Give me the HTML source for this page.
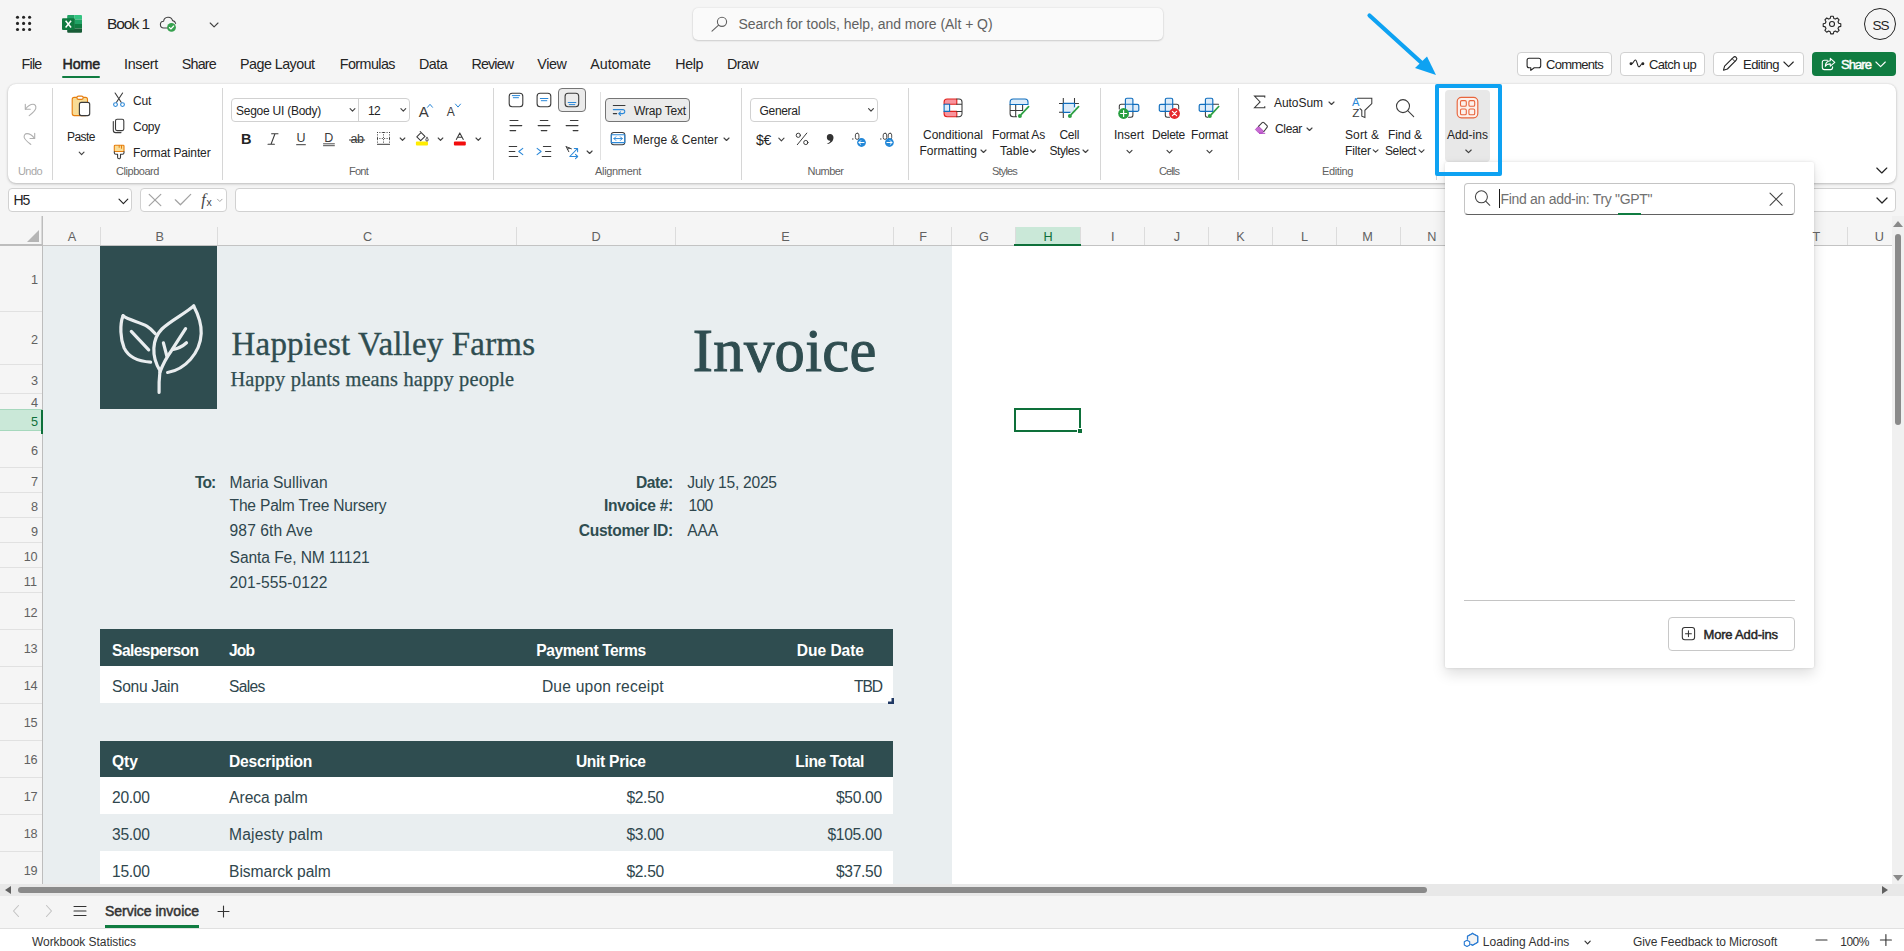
<!DOCTYPE html>
<html><head><meta charset="utf-8"><title>Book 1 - Excel</title>
<style>
*{box-sizing:border-box;margin:0;padding:0}
html,body{width:1904px;height:951px;overflow:hidden;background:#f5f5f5;font-family:"Liberation Sans",sans-serif;}
.a{position:absolute}
.t{position:absolute;white-space:pre;line-height:1;font-family:"Liberation Sans",sans-serif;}
.t.fs{font-family:"Liberation Serif",serif;}
svg{position:absolute;overflow:visible}
.sep{position:absolute;width:1px;background:#d6d6d6;top:88px;height:92px}
.btn{position:absolute;background:#fff;border:1px solid #d1d1d1;border-radius:4px}
.box{position:absolute;background:#fff;border:1px solid #d1d1d1;border-radius:4px}
.rl{position:absolute;left:0;width:42px;height:1px;background:#e1e1e1}
.cl{position:absolute;top:227px;width:1px;height:18px;background:#dcdcdc}
</style></head><body>
<!-- search -->
<div class="a" style="left:693px;top:8px;width:470px;height:32px;background:#fafafa;border-radius:5px;box-shadow:0 0 2px rgba(0,0,0,.12),0 1px 2px rgba(0,0,0,.14)"></div>
<!-- avatar -->
<div class="a" style="left:1864px;top:8px;width:32px;height:32px;border-radius:50%;border:1px solid #242424"></div>
<!-- tab underline -->
<div class="a" style="left:62.4px;top:75.5px;width:37.8px;height:2.5px;background:#107c41;border-radius:1px"></div>
<!-- top right buttons -->
<div class="btn" style="left:1517px;top:52px;width:95px;height:24px"></div>
<div class="btn" style="left:1620px;top:52px;width:85px;height:24px"></div>
<div class="btn" style="left:1713px;top:52px;width:91px;height:24px"></div>
<div class="a" style="left:1812px;top:52px;width:84px;height:24px;background:#107c41;border-radius:4px"></div>
<!-- ribbon -->
<div class="a" style="left:8px;top:84px;width:1888px;height:99px;background:#fff;border-radius:8px;box-shadow:0 1px 3px rgba(0,0,0,.22),0 0 2px rgba(0,0,0,.10)"></div>
<div class="sep" style="left:52px"></div>
<div class="sep" style="left:222px"></div>
<div class="sep" style="left:493px"></div>
<div class="sep" style="left:741px"></div>
<div class="sep" style="left:908px"></div>
<div class="sep" style="left:1100px"></div>
<div class="sep" style="left:1238px"></div>
<div class="sep" style="left:1436px;top:160px;height:20px"></div>
<div class="sep" style="left:600px;top:92px;height:68px;background:#e0e0e0"></div>
<!-- font boxes -->
<div class="box" style="left:231px;top:98px;width:179px;height:23.5px"></div>
<div class="a" style="left:358px;top:99px;width:1px;height:22px;background:#d1d1d1"></div>
<div class="box" style="left:750px;top:98px;width:128px;height:23.5px"></div>
<!-- selected align btn & wrap text -->
<div class="a" style="left:558px;top:88px;width:28px;height:24px;background:#ebebeb;border:1px solid #757575;border-radius:4px"></div>
<div class="a" style="left:605px;top:98px;width:85px;height:24px;background:#ebebeb;border:1px solid #757575;border-radius:4px"></div>
<!-- add-ins button bg -->
<div class="a" style="left:1445px;top:90px;width:45px;height:72px;background:#e8e8e8;border-radius:4px"></div>
<!-- formula bar -->
<div class="box" style="left:8px;top:188px;width:124px;height:24px"></div>
<div class="box" style="left:140px;top:188px;width:87px;height:24px"></div>
<div class="box" style="left:235px;top:188px;width:1661px;height:24px"></div>
<!-- grid headers -->
<div class="a" style="left:1015px;top:227px;width:65px;height:18px;background:#cae8d8"></div>
<div class="a" style="left:0;top:409px;width:42px;height:22px;background:#cae8d8;border-top:1px solid #a6d8bd;border-bottom:1px solid #a6d8bd"></div>
<div class="cl" style="left:100px"></div><div class="cl" style="left:217px"></div><div class="cl" style="left:516px"></div><div class="cl" style="left:675px"></div><div class="cl" style="left:893px"></div><div class="cl" style="left:951px"></div><div class="cl" style="left:1015px"></div><div class="cl" style="left:1080px"></div><div class="cl" style="left:1144px"></div><div class="cl" style="left:1208px"></div><div class="cl" style="left:1272px"></div><div class="cl" style="left:1336px"></div><div class="cl" style="left:1400px"></div><div class="cl" style="left:1847px"></div>
<div class="rl" style="top:311px"></div><div class="rl" style="top:364px"></div><div class="rl" style="top:393px"></div><div class="rl" style="top:467px"></div><div class="rl" style="top:492px"></div><div class="rl" style="top:517px"></div><div class="rl" style="top:542px"></div><div class="rl" style="top:567px"></div><div class="rl" style="top:592px"></div><div class="rl" style="top:629px"></div><div class="rl" style="top:666px"></div><div class="rl" style="top:703px"></div><div class="rl" style="top:740px"></div><div class="rl" style="top:777px"></div><div class="rl" style="top:814px"></div><div class="rl" style="top:851px"></div>
<div class="a" style="left:42px;top:216px;width:1px;height:668px;background:#bdbdbd"></div><div class="a" style="left:41px;top:216px;width:1px;height:29px;background:#dadada"></div>
<div class="a" style="left:0;top:244px;width:43px;height:2px;background:#bdbdbd"></div>
<div class="a" style="left:43px;top:245px;width:1849px;height:1px;background:#c3c3c3"></div>
<div class="a" style="left:1014px;top:244px;width:67px;height:2px;background:#0e703a"></div>
<div class="a" style="left:41px;top:410px;width:2px;height:24px;background:#0e703a"></div>
<svg style="left:27px;top:230px" width="12" height="12"><path d="M12 0V12H0Z" fill="#b5b5b5"/></svg>
<!-- sheet -->
<div class="a" style="left:43px;top:246px;width:1849px;height:638px;background:#fff"></div>
<div class="a" style="left:43px;top:246px;width:909px;height:638px;background:#e9eef0"></div>
<div class="a" style="left:100px;top:246px;width:117px;height:163px;background:#2f4d50"></div>
<div class="a" style="left:100px;top:629px;width:793px;height:37px;background:#2f4d50"></div>
<div class="a" style="left:100px;top:666px;width:793px;height:37px;background:#fff"></div>
<div class="a" style="left:100px;top:741px;width:793px;height:36px;background:#2f4d50"></div>
<div class="a" style="left:100px;top:777px;width:793px;height:37px;background:#fff"></div>
<div class="a" style="left:100px;top:851px;width:793px;height:33px;background:#fff"></div>
<svg style="left:888px;top:698px" width="6" height="6"><path d="M3.5 0H6V6H0V3.5H3.5Z" fill="#1f3864"/></svg>
<!-- logo -->
<svg style="left:0;top:0" width="1904" height="951" fill="none" stroke="#e9edef" stroke-width="3.2" stroke-linecap="round" stroke-linejoin="round">
<path d="M193.7 305.9 C198.5 315 201.6 324.5 201.2 333.5 C200.3 353 185 369.5 167.6 372.5"/>
<path d="M193.7 305.9 C186 313 170 321 161.9 329 C152 339 151 356 160 370.6 C159.3 377 158.8 385 159.1 392.4"/>
<path d="M185.6 328.6 L171.4 350.7 C166 358 163 364 160 372"/>
<path d="M173.3 349.4 C178 348.6 183 346 186.5 342.8"/>
<path d="M166.7 355.5 L163.4 342.8"/>
<path d="M123.1 315.7 C128 320 140 322 146.8 326.1 C150 328 153 331 155.3 333.7"/>
<path d="M123.1 315.7 C119.5 325 120.5 339 124.1 347.9 C129 358 139 361.5 150.6 362.1"/>
<path d="M131.3 331.4 L148.7 349.8"/>
</svg>
<!-- selection -->
<div class="a" style="left:1014px;top:408px;width:67px;height:24px;border:2px solid #0e703a"></div>
<div class="a" style="left:1077px;top:428px;width:6px;height:6px;background:#fff"></div>
<div class="a" style="left:1078px;top:429px;width:4px;height:4px;background:#0e703a"></div>
<!-- vscroll -->
<div class="a" style="left:1892px;top:216px;width:12px;height:668px;background:#f0f0f0"></div>
<div class="a" style="left:1895px;top:234px;width:6px;height:191px;background:#8a8a8a;border-radius:3px"></div>
<svg style="left:1893px;top:221px" width="10" height="6"><path d="M0 6L5 0L10 6Z" fill="#8a8a8a"/></svg>
<svg style="left:1893px;top:875px" width="10" height="6"><path d="M0 0L5 6L10 0Z" fill="#8a8a8a"/></svg>
<!-- hscroll -->
<div class="a" style="left:0;top:884px;width:1904px;height:12px;background:#e8e8e8"></div>
<div class="a" style="left:18px;top:887px;width:1409px;height:6px;background:#8a8a8a;border-radius:3px"></div>
<svg style="left:5px;top:886px" width="6" height="8"><path d="M6 0L0 4L6 8Z" fill="#616161"/></svg>
<svg style="left:1882px;top:886px" width="6" height="8"><path d="M0 0L6 4L0 8Z" fill="#616161"/></svg>
<!-- sheet tabs / status -->
<div class="a" style="left:0;top:896px;width:1904px;height:32px;background:#f5f5f5"></div>
<div class="a" style="left:105px;top:925px;width:94px;height:3px;background:#107c41"></div>
<div class="a" style="left:0;top:928px;width:1904px;height:1px;background:#e0e0e0"></div>
<div class="a" style="left:0;top:929px;width:1904px;height:22px;background:#fff"></div>
<!-- popup -->
<div class="a" style="left:1445px;top:162px;width:369px;height:506px;background:#fff;border-radius:2px;box-shadow:0 6px 14px rgba(0,0,0,.13),0 0 3px rgba(0,0,0,.13)"></div>
<div class="a" style="left:1464px;top:183px;width:331px;height:32px;background:#fff;border:1px solid #c4c4c4;border-bottom:1.5px solid #616161;border-radius:4px"></div>
<div class="a" style="left:1618px;top:213px;width:23px;height:2px;background:#107c41"></div>
<div class="a" style="left:1499px;top:189px;width:1px;height:19px;background:#1a1a1a"></div>
<div class="a" style="left:1464px;top:600px;width:331px;height:1px;background:#c4c4c4"></div>
<div class="btn" style="left:1668px;top:617px;width:127px;height:34px;border-color:#c8c8c8"></div>
<!-- highlight -->
<div class="a" style="left:1435px;top:84px;width:67px;height:91.5px;border:4px solid #0ea2f2;border-radius:2px"></div>
<svg style="left:0;top:0" width="1904" height="951"><path d="M1369.5 15.5L1424 65" stroke="#0ea2f2" stroke-width="4.2" stroke-linecap="round" fill="none"/><path d="M1436 75L1415 68L1427 56.5Z" fill="#0ea2f2"/></svg>
<svg style="left:0;top:0" width="1904" height="951" fill="none" stroke-linecap="round" stroke-linejoin="round">
<!-- waffle -->
<g fill="#242424" stroke="none">
<circle cx="17.5" cy="17.3" r="1.55"/><circle cx="23.6" cy="17.3" r="1.55"/><circle cx="29.6" cy="17.3" r="1.55"/>
<circle cx="17.5" cy="23.4" r="1.55"/><circle cx="23.6" cy="23.4" r="1.55"/><circle cx="29.6" cy="23.4" r="1.55"/>
<circle cx="17.5" cy="29.5" r="1.55"/><circle cx="23.6" cy="29.5" r="1.55"/><circle cx="29.6" cy="29.5" r="1.55"/>
</g>
<!-- excel logo -->
<g stroke="none">
<path d="M68.2 15H74.6V19.5H67.2V16A1 1 0 0 1 68.2 15Z" fill="#21a366"/>
<path d="M74.6 15H81A1 1 0 0 1 82 16V19.5H74.6Z" fill="#33c481"/>
<rect x="67.2" y="19.5" width="7.4" height="4.5" fill="#107c41"/>
<rect x="74.6" y="19.5" width="7.4" height="4.5" fill="#21a366"/>
<rect x="67.2" y="24" width="7.4" height="4.5" fill="#185c37"/>
<rect x="74.6" y="24" width="7.4" height="4.5" fill="#107c41"/>
<path d="M67.2 28.5H82V31.8A1 1 0 0 1 81 32.8H68.2A1 1 0 0 1 67.2 31.8Z" fill="#185c37"/>
<rect x="62" y="18.2" width="12.7" height="11.8" rx="1" fill="#0f7a40"/>
<path d="M65.6 20.8L71.1 27.5M71.1 20.8L65.6 27.5" stroke="#fff" stroke-width="1.5" stroke-linecap="butt"/>
</g>
<!-- cloud saved -->
<path d="M170 28H164A3.4 3.4 0 0 1 163.6 21.2A4.6 4.6 0 0 1 172.6 20.6A3.6 3.6 0 0 1 175.6 23.4" stroke="#424242" stroke-width="1.1"/>
<circle cx="171.5" cy="27.4" r="4.4" fill="#37a14f" stroke="none"/>
<path d="M169.4 27.5L170.9 29L173.7 26" stroke="#fff" stroke-width="1.1"/>
<path d="M210.2 23L214.1 26.9L218 23" stroke="#424242" stroke-width="1.1"/>
<!-- search icon -->
<circle cx="722" cy="21.8" r="4.6" stroke="#616161" stroke-width="1.1"/>
<path d="M718.6 25.2L712 31.2" stroke="#616161" stroke-width="1.1"/>
<!-- gear -->
<g stroke="#242424" stroke-width="1.1">
<circle cx="1832" cy="24" r="2.5"/>
<path d="M1830.7 16.3h2.6l.5 2.1 1.6.7 1.9-1.1 1.8 1.8-1.1 1.9.7 1.6 2.1.5v2.6l-2.1.5-.7 1.6 1.1 1.9-1.8 1.8-1.9-1.1-1.6.7-.5 2.1h-2.6l-.5-2.1-1.6-.7-1.9 1.1-1.8-1.8 1.1-1.9-.7-1.6-2.1-.5v-2.6l2.1-.5.7-1.6-1.1-1.9 1.8-1.8 1.9 1.1 1.6-.7z"/>
</g>
<!-- comments -->
<path d="M1529.1 58.3H1538.7A2 2 0 0 1 1540.7 60.3V65.7A2 2 0 0 1 1538.700 67.7H1534.2L1530.800 70.400V67.700H1529.100A2 2 0 0 1 1527.100 65.700V60.300A2 2 0 0 1 1529.100 58.300Z" stroke="#242424" stroke-width="1.1"/>
<!-- catch up -->
<g stroke="#242424" stroke-width="1.1"><circle cx="1631" cy="63.8" r="0.9" fill="#242424"/><circle cx="1642.9" cy="63.800" r="0.9" fill="#242424"/>
<path d="M1631.500 63.800C1633.500 63.800 1633.800 60 1635.400 60C1637.200 60 1637.200 66.900 1639 66.900C1640.400 66.900 1640.600 63.800 1642.400 63.800"/></g>
<!-- pencil -->
<path d="M1724.600 66.200L1733.400 57.400A1.900 1.900 0 0 1 1736.200 60.200L1727.400 69L1723.500 70.200Z" stroke="#242424" stroke-width="1.1"/>
<path d="M1732.200 58.700L1734.900 61.400" stroke="#242424" stroke-width="1"/>
<path d="M1783.900 62L1788.600 66.700L1793.300 62" stroke="#242424" stroke-width="1.100"/>
<!-- share icon -->
<g stroke="#fff" stroke-width="1.1">
<path d="M1827.500 60.300H1824.300A2 2 0 0 0 1822.300 62.300V67.600A2 2 0 0 0 1824.300 69.600H1830.600A2 2 0 0 0 1832.600 67.600V66.800"/>
<path d="M1830.300 58.400L1834.800 62.400L1830.300 66.200V63.900C1828 63.800 1826.300 64.600 1825.300 66.300C1825.500 63.200 1827.200 61 1830.300 60.700Z"/>
</g>
<path d="M1875.900 62L1880.600 66.700L1885.300 62" stroke="#fff" stroke-width="1.1"/>
</svg>
<svg style="left:0;top:0" width="1904" height="951" fill="none" stroke-linecap="round" stroke-linejoin="round">
<!-- undo / redo -->
<g stroke="#b0b0b0" stroke-width="1.1">
<path d="M25.3 104.3V109.3H30.300"/><path d="M25.500 109.100C27.500 106.500 30.400 104.300 33 104.300C35 104.300 36.200 106 35.800 108.300C35.300 110.500 32.500 113 29.200 115.600"/>
<path d="M34.700 133.200V138.500H30"/><path d="M34.500 138.300C32.500 135.700 29.600 133.600 27 133.600C25 133.600 23.800 135.300 24.200 137.500C24.700 139.700 27.500 141.800 30.800 144.400"/>
</g>
<!-- paste -->
<path d="M74.200 97.400H85.500A2 2 0 0 1 87.500 99.400V113.600A2 2 0 0 1 85.500 115.600H74.200A2 2 0 0 1 72.200 113.600V99.400A2 2 0 0 1 74.200 97.400Z" fill="#f9dc95" stroke="#e67e0e" stroke-width="1.1"/>
<rect x="76.900" y="96.100" width="6.300" height="3.300" rx="1.650" fill="#fff" stroke="#e67e0e" stroke-width="1.100"/>
<rect x="79.400" y="102.300" width="10.300" height="13.300" rx="2" fill="#fff" stroke="#3b3b3b" stroke-width="1.150"/>
<path d="M79.200 152.200L81.600 154.600L84 152.200" stroke="#424242" stroke-width="1.150"/>
<!-- cut -->
<path d="M115.100 93L121.200 102.200M122.600 93L116.500 102.200" stroke="#3b3b3b" stroke-width="1.1"/>
<circle cx="115.500" cy="104.600" r="1.900" stroke="#2b88d8" stroke-width="1.100"/><circle cx="122.500" cy="104.600" r="1.900" stroke="#2b88d8" stroke-width="1.100"/>
<!-- copy -->
<rect x="115.500" y="119.300" width="8.300" height="11.300" rx="1.600" stroke="#3b3b3b" stroke-width="1.100"/>
<path d="M113.300 121.600V130.300A2.300 2.300 0 0 0 115.600 132.600H121" stroke="#3b3b3b" stroke-width="1.100"/>
<!-- format painter -->
<rect x="114.300" y="145.300" width="9.700" height="6.200" rx="0.800" fill="#f9dc95" stroke="#e67e0e" stroke-width="1.100"/>
<path d="M119.200 145.500V147.400M121.500 145.500V148.300" stroke="#e67e0e" stroke-width="1"/>
<path d="M114.300 151.600V152.700A1.600 1.600 0 0 0 115.900 154.300H117.600V157.300A1.450 1.450 0 0 0 120.500 157.300V154.300H122.400A1.600 1.600 0 0 0 124 152.700V151.600" stroke="#3b3b3b" stroke-width="1.100"/>
<!-- font dropdown chevrons -->
<path d="M350.100 108.700L352.500 111.100L354.900 108.700" stroke="#424242" stroke-width="1.150"/>
<path d="M400.900 108.700L403.300 111.100L405.700 108.700" stroke="#424242" stroke-width="1.150"/>
<!-- grow / shrink font carets -->
<path d="M427.500 107.300L430 104.300L432.500 107.300" stroke="#2b88d8" stroke-width="1"/>
<path d="M455.500 104.100L458 107.100L460.500 104.100" stroke="#2b88d8" stroke-width="1"/>
<!-- italic I -->
<path d="M271.600 133.800H278M268 144.200H274.400M275 133.800L271 144.200" stroke="#3b3b3b" stroke-width="1.050"/>
<!-- underline bars -->
<path d="M296.600 144.700H305.400" stroke="#3b3b3b" stroke-width="1"/>
<path d="M323.500 143.800H334.400M323.500 145.700H334.400" stroke="#3b3b3b" stroke-width="0.900"/>
<!-- strikethrough -->
<path d="M349.400 140H364.700" stroke="#3b3b3b" stroke-width="1"/>
<!-- borders -->
<g stroke="#3b3b3b" stroke-width="1" stroke-linecap="butt">
<path d="M377 144.300H390" />
<path d="M377 132.500H390M377 138.500H390" stroke-dasharray="1 1.4"/>
<path d="M377.500 132V143.500M383.500 132V143.500M389.500 132V143.500" stroke-dasharray="1 1.4"/>
</g>
<path d="M400.200 138L402.500 140.300L404.800 138" stroke="#424242" stroke-width="1.150"/>
<!-- fill bucket -->
<rect x="415.900" y="141.400" width="12.100" height="4.100" rx="1" fill="#ffec00"/>
<path d="M421 132.600L416.800 136.800L420.700 140.700L425 136.400L420.200 131.600" stroke="#3b3b3b" stroke-width="1.050"/>
<path d="M427 137.500C426.300 138.500 425.800 139.200 425.800 139.900A1.200 1.200 0 0 0 428.200 139.900C428.200 139.200 427.700 138.500 427 137.500Z" stroke="#3b3b3b" stroke-width="0.900"/>
<path d="M438.200 138L440.500 140.300L442.800 138" stroke="#424242" stroke-width="1.150"/>
<!-- font color -->
<rect x="453.900" y="141.400" width="11.900" height="4.100" rx="1" fill="#f20d0d"/>
<path d="M456.300 139.400L459.800 132.900L463.300 139.400M457.500 137.300H462.100" stroke="#3b3b3b" stroke-width="1.050"/>
<path d="M476 138L478.300 140.300L480.600 138" stroke="#424242" stroke-width="1.150"/>
<!-- vertical align icons -->
<g stroke="#3b3b3b" stroke-width="1.100">
<rect x="509.200" y="93.300" width="13.600" height="13.400" rx="3"/>
<rect x="537.100" y="93.300" width="13.700" height="13.400" rx="3"/>
<rect x="565.100" y="93.300" width="13.600" height="13.400" rx="3"/>
</g>
<g stroke="#2b88d8" stroke-width="1">
<path d="M512.300 95.600H519.700M513.300 97.700H518.500"/>
<path d="M540.300 98.500H547.900M541.300 100.700H546.800"/>
<path d="M568.200 102.500H575.800M569.200 104.600H574.800"/>
</g>
<!-- horizontal align -->
<g stroke="#3b3b3b" stroke-width="1.050">
<path d="M510 120.500H518M510 125.600H521.800M510 130.600H515.700"/>
<path d="M540.300 120.500H547.900M538.100 125.600H550M541.200 130.600H546.900"/>
<path d="M570.400 120.500H578M566.100 125.600H578M573.100 130.600H578"/>
<path d="M509.200 146.400H516.700M509.200 151.500H514.900M509.200 156.500H517.700"/>
<path d="M543.400 146.400H550.800M545.500 151.500H550.800M542.200 156.500H550.800"/>
</g>
<path d="M522.800 148.300L518.800 151.500L522.800 154.700" stroke="#2b88d8" stroke-width="1.050"/>
<path d="M537.100 148.300L541.100 151.500L537.100 154.700" stroke="#2b88d8" stroke-width="1.050"/>
<!-- orientation -->
<path d="M566.200 146.700L568.800 151.700M566.200 146.700L571.400 148.800M567.300 149.300L569.600 148.200" stroke="#3b3b3b" stroke-width="1"/>
<path d="M569.800 156.500L577.400 148.700M574.300 148.500H577.600V151.800M569.800 156.500H577.600M575.500 154.400L577.700 156.500L575.500 158.600" stroke="#2b88d8" stroke-width="1.050"/>
<path d="M587.100 151L589.600 153.500L592.100 151" stroke="#424242" stroke-width="1.150"/>
<!-- wrap text -->
<path d="M613.300 105.400H625M613.300 113.600H616.700" stroke="#3b3b3b" stroke-width="1.050"/>
<path d="M613.300 109.600H622.800A2 2 0 0 1 622.800 113.600H619M620.500 111.800L618.700 113.600L620.500 115.400" stroke="#2b88d8" stroke-width="1.050"/>
<!-- merge -->
<rect x="611.300" y="132.400" width="13.500" height="12.300" rx="2.500" stroke="#3b3b3b" stroke-width="1.050"/>
<rect x="611.300" y="134.700" width="13.500" height="7.900" stroke="#2b88d8" stroke-width="1.100"/>
<path d="M614 138.600H622.200M615.800 136.800L614 138.600L615.800 140.400M620.400 136.800L622.200 138.600L620.400 140.400" stroke="#2b88d8" stroke-width="1"/>
<path d="M724 138L726.500 140.500L729 138" stroke="#424242" stroke-width="1.150"/>
<!-- number format chevron -->
<path d="M868.600 108.700L871 111.100L873.400 108.700" stroke="#424242" stroke-width="1.150"/>
<path d="M778.800 138.200L781.400 140.800L784 138.200" stroke="#424242" stroke-width="1.150"/>
<!-- comma -->
<path d="M830 134A3.300 3.300 0 0 1 833.500 137.400C833.500 141.200 830.600 143.600 826.800 144.100C828.700 143.100 830 141.900 830.400 140.700A3.300 3.300 0 0 1 830 134Z" fill="#333" stroke="none"/>
<!-- percent -->
<g stroke="#3b3b3b" stroke-width="1">
<path d="M806.800 133.100L797.300 144.700"/>
<circle cx="798.300" cy="135.300" r="2.100"/><circle cx="805.800" cy="142.500" r="2.100"/>
</g>
<!-- decimals -->
<rect x="852.200" y="138.400" width="1.200" height="1.200" fill="#3b3b3b"/>
<rect x="855.400" y="133.200" width="3.500" height="6.200" rx="1.750" stroke="#3b3b3b" stroke-width="0.900"/>
<circle cx="861.500" cy="142.500" r="4.400" fill="#2488d8" stroke="none"/>
<path d="M859 142.500H864M860.700 140.700L858.900 142.500L860.700 144.300" stroke="#fff" stroke-width="1"/>
<rect x="880.200" y="138.400" width="1.200" height="1.200" fill="#3b3b3b"/>
<rect x="883.200" y="133.200" width="3.500" height="6.200" rx="1.750" stroke="#3b3b3b" stroke-width="0.900"/>
<rect x="888.200" y="133.200" width="3.500" height="6.200" rx="1.750" stroke="#3b3b3b" stroke-width="0.900"/>
<circle cx="889.400" cy="142.500" r="4.400" fill="#2488d8" stroke="none"/>
<path d="M886.900 142.500H891.900M890.200 140.700L892 142.500L890.200 144.300" stroke="#fff" stroke-width="1"/>
</svg>
<svg style="left:0;top:0" width="1904" height="951" fill="none" stroke-linecap="round" stroke-linejoin="round">
<!-- conditional formatting -->
<path d="M947.100 99H956.800V104.300H944.100V102A3 3 0 0 1 947.100 99Z" fill="#f9949d" stroke="#e0201c" stroke-width="1.100"/>
<path d="M944.100 111.400H956.800V116.800H947.100A3 3 0 0 1 944.100 113.800Z" fill="#f9949d" stroke="#e0201c" stroke-width="1.100"/>
<rect x="944.100" y="104.300" width="5.500" height="7.100" fill="#deecf9" stroke="#106ebe" stroke-width="1.100"/>
<path d="M956.800 99H959A3 3 0 0 1 962 102V113.800A3 3 0 0 1 959 116.800H956.800M956.800 104.300H962M956.800 111.400H962" stroke="#3b3b3b" stroke-width="1.050"/>
<!-- format as table -->
<path d="M1010.100 104.500V113.800A3 3 0 0 0 1013.100 116.800H1016.500M1015.700 104.500V116.800M1022.600 104.500V110.500M1010.100 110.500H1022.600" stroke="#3b3b3b" stroke-width="1.050"/>
<path d="M1013.100 99H1025A3 3 0 0 1 1028 102V104.500H1010.100V102A3 3 0 0 1 1013.100 99Z" fill="#deecf9" stroke="#106ebe" stroke-width="1.100"/>
<path d="M1028.600 106.600L1021.300 114.400" stroke="#2ea043" stroke-width="1.700"/>
<circle cx="1019.900" cy="116" r="2" fill="#2ea043" stroke="none"/>
<!-- cell styles -->
<path d="M1063.300 98V117.900M1074.500 98V103.400M1059 103.400H1078.900M1059 112.300H1063.300" stroke="#3b3b3b" stroke-width="1.050" stroke-linecap="butt"/>
<rect x="1063.300" y="103.400" width="11.200" height="8.900" fill="#deecf9" stroke="#106ebe" stroke-width="1.200"/>
<path d="M1071 112.300H1074.500V108" stroke="#fff" stroke-width="1.500"/>
<path d="M1078.600 106.600L1071.300 114.400" stroke="#2ea043" stroke-width="1.700"/>
<circle cx="1069.900" cy="116" r="2" fill="#2ea043" stroke="none"/>
<!-- styles chevrons -->
<path d="M981 150L983.500 152.500L986 150" stroke="#424242" stroke-width="1.150"/>
<path d="M1030.500 150L1033 152.500L1035.500 150" stroke="#424242" stroke-width="1.150"/>
<path d="M1083 150L1085.500 152.500L1088 150" stroke="#424242" stroke-width="1.150"/>
<!-- insert -->
<path d="M1125.400 104.300H1121.300A2 2 0 0 0 1119.300 106.300V109M1132.900 111.400V115.200A2 2 0 0 1 1130.900 117.200H1128.500" stroke="#3b3b3b" stroke-width="1.050"/>
<path d="M1126.900 98.200H1131.400A1.500 1.500 0 0 1 1132.900 99.700V104.300H1137.300A1.500 1.500 0 0 1 1138.800 105.800V109.900A1.500 1.500 0 0 1 1137.300 111.400H1125.400V99.700A1.500 1.500 0 0 1 1126.900 98.200Z" fill="#deecf9" stroke="#106ebe" stroke-width="1.150"/>
<path d="M1125.400 104.300H1132.900V111.400" stroke="#106ebe" stroke-width="1.100"/>
<circle cx="1123.600" cy="113.500" r="5.400" fill="#279e40" stroke="none"/>
<path d="M1120.600 113.500H1126.600M1123.600 110.500V116.500" stroke="#fff" stroke-width="1.200"/>
<!-- delete -->
<path d="M1172.700 104.300H1176.700A2 2 0 0 1 1178.700 106.300V109M1165.300 111.400V115.200A2 2 0 0 0 1167.300 117.200H1169.500" stroke="#3b3b3b" stroke-width="1.050"/>
<path d="M1166.800 98.200H1171.200A1.500 1.500 0 0 1 1172.700 99.700V111.400H1160.800A1.500 1.500 0 0 1 1159.300 109.900V105.800A1.500 1.500 0 0 1 1160.800 104.300H1165.300V99.700A1.500 1.500 0 0 1 1166.800 98.200Z" fill="#deecf9" stroke="#106ebe" stroke-width="1.150"/>
<path d="M1172.700 104.300H1165.300V111.400" stroke="#106ebe" stroke-width="1.100"/>
<circle cx="1174.500" cy="113.500" r="5.400" fill="#e5282d" stroke="none"/>
<path d="M1172.400 111.400L1176.600 115.600M1176.600 111.400L1172.400 115.600" stroke="#fff" stroke-width="1.200"/>
<!-- format -->
<path d="M1212.800 104.300H1218.500M1205.400 111.400V115.200A2 2 0 0 0 1207.400 117.200H1208" stroke="#3b3b3b" stroke-width="1.050"/>
<path d="M1206.900 98.200H1211.300A1.500 1.500 0 0 1 1212.800 99.700V111.400H1200.700A1.500 1.500 0 0 1 1199.200 109.900V105.800A1.500 1.500 0 0 1 1200.700 104.300H1205.400V99.700A1.500 1.500 0 0 1 1206.900 98.200Z" fill="#deecf9" stroke="#106ebe" stroke-width="1.150"/>
<path d="M1212.800 104.300H1205.400V111.400" stroke="#106ebe" stroke-width="1.100"/>
<path d="M1218.700 106.500L1211.400 114.400" stroke="#2ea043" stroke-width="1.700"/>
<circle cx="1209.800" cy="116" r="2" fill="#2ea043" stroke="none"/>
<!-- cells chevrons -->
<path d="M1127 150.300L1129.500 152.800L1132 150.300" stroke="#424242" stroke-width="1.150"/>
<path d="M1167 150.300L1169.500 152.800L1172 150.300" stroke="#424242" stroke-width="1.150"/>
<path d="M1207 150.300L1209.500 152.800L1212 150.300" stroke="#424242" stroke-width="1.150"/>
<!-- sigma -->
<path d="M1264.800 97.300V96.100H1254.500L1260.100 101.900L1254.500 107.700H1264.800V106.500" stroke="#3b3b3b" stroke-width="1.050" stroke-linejoin="miter"/>
<path d="M1329 102L1331.500 104.500L1334 102" stroke="#424242" stroke-width="1.150"/>
<!-- eraser -->
<path d="M1255.600 129.200L1258.500 126.300L1263.900 131.500L1262 133.200H1259.400Z" fill="#c86bd2" stroke="#b146c2" stroke-width="0.900"/>
<path d="M1258.500 126.300L1262.200 122.600A1.200 1.200 0 0 1 1263.900 122.600L1267 125.700A1.200 1.200 0 0 1 1267 127.400L1263.900 131.500" stroke="#3b3b3b" stroke-width="1.050"/>
<path d="M1259.400 133.300H1264.800" stroke="#b146c2" stroke-width="1"/>
<path d="M1307 128L1309.500 130.500L1312 128" stroke="#424242" stroke-width="1.150"/>
<!-- sort & filter funnel -->
<path d="M1357.500 98.200H1371.800V103.600L1364.900 110.300V117.500L1361.800 116.200V110.300L1360 108.600" stroke="#3b3b3b" stroke-width="1.050" stroke-linejoin="miter"/>
<path d="M1373.200 149.800L1375.600 152.200L1378 149.800" stroke="#424242" stroke-width="1.150"/>
<!-- find -->
<circle cx="1403" cy="106.100" r="6.500" stroke="#3b3b3b" stroke-width="1.050"/>
<path d="M1407.700 110.700L1413.700 116.600" stroke="#3b3b3b" stroke-width="1.050"/>
<path d="M1419 149.800L1421.500 152.300L1424 149.800" stroke="#424242" stroke-width="1.150"/>
<!-- add-ins -->
<rect x="1457.200" y="97.400" width="20.600" height="20.400" rx="4.200" fill="#fdf1ec" stroke="#e8653d" stroke-width="1.150"/>
<g stroke="#e8653d" stroke-width="1.100">
<rect x="1460.500" y="100.600" width="5.800" height="5.700" rx="1.300"/><rect x="1468.900" y="100.600" width="5.800" height="5.700" rx="1.300"/>
<rect x="1460.500" y="109" width="5.800" height="5.700" rx="1.300"/><rect x="1468.900" y="109" width="5.800" height="5.700" rx="1.300"/>
</g>
<path d="M1465.800 150L1468.500 152.700L1471.200 150" stroke="#424242" stroke-width="1.150"/>
<!-- ribbon collapse -->
<path d="M1876.800 168L1881.800 173L1886.800 168" stroke="#242424" stroke-width="1.150"/>
<!-- formula bar -->
<path d="M119 199.200L123.400 203.600L127.800 199.200" stroke="#242424" stroke-width="1.150"/>
<path d="M149.200 194.400L160.800 205.600M160.800 194.400L149.200 205.600" stroke="#a3a3a3" stroke-width="1.250"/>
<path d="M175.300 199.800L180.400 204.800L190.700 194.400" stroke="#a3a3a3" stroke-width="1.250"/>
<path d="M217.500 199.200L219.800 201.500L222.100 199.200" stroke="#a6a6a6" stroke-width="1"/>
<path d="M1877 198L1882 203L1887 198" stroke="#242424" stroke-width="1.300"/>
<!-- popup search & close -->
<circle cx="1481.400" cy="196.800" r="6" stroke="#424242" stroke-width="1.050"/>
<path d="M1485.700 201.200L1489.800 205.300" stroke="#424242" stroke-width="1.050"/>
<path d="M1770 193.100L1782.200 205.300M1782.200 193.100L1770 205.300" stroke="#424242" stroke-width="1.050"/>
<!-- more add-ins icon -->
<rect x="1682.300" y="627.500" width="12.300" height="12.300" rx="2.500" stroke="#333" stroke-width="1.050"/>
<path d="M1685.500 633.650H1691.400M1688.450 630.700V636.600" stroke="#333" stroke-width="1.050"/>
<!-- sheet tab bar -->
<path d="M18.500 905.500L13.500 911L18.500 916.500" stroke="#c2c2c2" stroke-width="1.100"/>
<path d="M46.500 905.500L51.500 911L46.500 916.500" stroke="#c2c2c2" stroke-width="1.100"/>
<path d="M74 906.500H86M74 911H86M74 915.500H86" stroke="#333" stroke-width="1.100"/>
<path d="M218 911.500H229M223.500 906V917" stroke="#333" stroke-width="1.100"/>
<!-- status bar -->
<path d="M1472.500 933.400L1477.700 936.300V942.300L1472.500 945.200L1470.900 944.300M1467.500 939V936.300L1472.500 933.400" fill="none" stroke="#2b7cd3" stroke-width="1.150"/>
<path d="M1472.500 934L1477.200 936.600V942L1472.500 944.600L1468 942V936.600Z" fill="#f3f3f3" stroke="none"/>
<path d="M1472.500 933.400L1477.700 936.300V942.300L1472.500 945.200L1470.900 944.300M1467.500 939V936.300L1472.500 933.400" fill="none" stroke="#2b7cd3" stroke-width="1.150"/>
<path d="M1467 940.300L1469.700 941.850V944.950L1467 946.500L1464.300 944.950V941.850Z" fill="#fff" stroke="#2b7cd3" stroke-width="1.150"/>
<path d="M1585 941.200L1587.600 943.800L1590.200 941.200" stroke="#333" stroke-width="1.200"/>
<path d="M1816 940H1827" stroke="#333" stroke-width="1.100"/>
<path d="M1880.400 940H1891.400M1885.900 934.500V945.500" stroke="#333" stroke-width="1.100"/>
</svg>

<span class="t f" style="left:107.00px;top:16.28px;font-size:15.5px;letter-spacing:-1.044px;color:#242424;">Book 1</span>
<span class="t f" style="left:738.50px;top:17.15px;font-size:14px;letter-spacing:-0.036px;color:#616161;">Search for tools, help, and more (Alt + Q)</span>
<span class="t f" style="left:1872.50px;top:18.57px;font-size:13.5px;letter-spacing:-1.008px;color:#242424;">SS</span>
<span class="t f" style="left:21.40px;top:56.80px;font-size:14.3px;letter-spacing:-0.712px;color:#242424;">File</span>
<span class="t f" style="left:62.40px;top:56.80px;font-size:14.3px;letter-spacing:-0.085px;color:#242424;-webkit-text-stroke:0.5px #242424;">Home</span>
<span class="t f" style="left:124.00px;top:56.80px;font-size:14.3px;letter-spacing:-0.294px;color:#242424;">Insert</span>
<span class="t f" style="left:181.70px;top:56.80px;font-size:14.3px;letter-spacing:-0.771px;color:#242424;">Share</span>
<span class="t f" style="left:240.10px;top:56.80px;font-size:14.3px;letter-spacing:-0.536px;color:#242424;">Page Layout</span>
<span class="t f" style="left:339.70px;top:56.80px;font-size:14.3px;letter-spacing:-0.537px;color:#242424;">Formulas</span>
<span class="t f" style="left:418.90px;top:56.80px;font-size:14.3px;letter-spacing:-0.451px;color:#242424;">Data</span>
<span class="t f" style="left:471.40px;top:56.80px;font-size:14.3px;letter-spacing:-0.815px;color:#242424;">Review</span>
<span class="t f" style="left:537.20px;top:56.80px;font-size:14.3px;letter-spacing:-0.334px;color:#242424;">View</span>
<span class="t f" style="left:590.30px;top:56.80px;font-size:14.3px;letter-spacing:-0.063px;color:#242424;">Automate</span>
<span class="t f" style="left:675.20px;top:56.80px;font-size:14.3px;letter-spacing:-0.352px;color:#242424;">Help</span>
<span class="t f" style="left:727.10px;top:56.80px;font-size:14.3px;letter-spacing:-0.569px;color:#242424;">Draw</span>
<span class="t f" style="left:1546.00px;top:58.00px;font-size:13px;letter-spacing:-0.732px;color:#242424;">Comments</span>
<span class="t f" style="left:1649.00px;top:58.00px;font-size:13px;letter-spacing:-0.631px;color:#242424;">Catch up</span>
<span class="t f" style="left:1743.00px;top:58.00px;font-size:13px;letter-spacing:-0.536px;color:#242424;">Editing</span>
<span class="t f" style="left:1841.00px;top:58.00px;font-size:13px;letter-spacing:-0.941px;color:#ffffff;-webkit-text-stroke:0.45px #fff;">Share</span>
<span class="t f" style="left:18.00px;top:165.69px;font-size:11px;letter-spacing:-0.574px;color:#a8a8a8;">Undo</span>
<span class="t f" style="left:67.00px;top:130.84px;font-size:12px;letter-spacing:-0.537px;color:#242424;">Paste</span>
<span class="t f" style="left:133.00px;top:94.84px;font-size:12px;letter-spacing:-0.229px;color:#242424;">Cut</span>
<span class="t f" style="left:133.00px;top:120.84px;font-size:12px;letter-spacing:-0.254px;color:#242424;">Copy</span>
<span class="t f" style="left:133.00px;top:146.84px;font-size:12px;letter-spacing:-0.133px;color:#242424;">Format Painter</span>
<span class="t f" style="left:116.00px;top:166.19px;font-size:11px;letter-spacing:-0.455px;color:#616161;">Clipboard</span>
<span class="t f" style="left:236.00px;top:104.84px;font-size:12px;letter-spacing:-0.248px;color:#242424;">Segoe UI (Body)</span>
<span class="t f" style="left:368.00px;top:104.84px;font-size:12px;letter-spacing:-0.680px;color:#242424;">12</span>
<span class="t f" style="left:349.00px;top:166.19px;font-size:11px;letter-spacing:-0.754px;color:#616161;">Font</span>
<span class="t f" style="left:634.00px;top:104.84px;font-size:12px;letter-spacing:-0.175px;color:#242424;">Wrap Text</span>
<span class="t f" style="left:633.00px;top:133.84px;font-size:12px;letter-spacing:0.021px;color:#242424;">Merge &amp; Center</span>
<span class="t f" style="left:595.00px;top:166.19px;font-size:11px;letter-spacing:-0.325px;color:#616161;">Alignment</span>
<span class="t f" style="left:759.50px;top:104.84px;font-size:12px;letter-spacing:-0.315px;color:#242424;">General</span>
<span class="t f" style="left:756.00px;top:132.65px;font-size:14px;letter-spacing:-0.289px;color:#242424;">$€</span>
<span class="t f" style="left:807.50px;top:166.19px;font-size:11px;letter-spacing:-0.521px;color:#616161;">Number</span>
<span class="t f" style="left:923.00px;top:128.84px;font-size:12px;letter-spacing:-0.004px;color:#242424;">Conditional</span>
<span class="t f" style="left:919.50px;top:144.84px;font-size:12px;letter-spacing:0.014px;color:#242424;">Formatting</span>
<span class="t f" style="left:992.00px;top:128.84px;font-size:12px;letter-spacing:-0.188px;color:#242424;">Format As</span>
<span class="t f" style="left:1000.00px;top:144.84px;font-size:12px;letter-spacing:0.062px;color:#242424;">Table</span>
<span class="t f" style="left:1059.50px;top:128.84px;font-size:12px;letter-spacing:-0.293px;color:#242424;">Cell</span>
<span class="t f" style="left:1049.50px;top:144.84px;font-size:12px;letter-spacing:-0.448px;color:#242424;">Styles</span>
<span class="t f" style="left:992.00px;top:166.19px;font-size:11px;letter-spacing:-0.828px;color:#616161;">Styles</span>
<span class="t f" style="left:1114.00px;top:128.84px;font-size:12px;letter-spacing:-0.003px;color:#242424;">Insert</span>
<span class="t f" style="left:1152.00px;top:128.84px;font-size:12px;letter-spacing:-0.281px;color:#242424;">Delete</span>
<span class="t f" style="left:1191.00px;top:128.84px;font-size:12px;letter-spacing:-0.169px;color:#242424;">Format</span>
<span class="t f" style="left:1159.00px;top:166.19px;font-size:11px;letter-spacing:-0.891px;color:#616161;">Cells</span>
<span class="t f" style="left:1274.00px;top:96.84px;font-size:12px;letter-spacing:-0.051px;color:#242424;">AutoSum</span>
<span class="t f" style="left:1275.00px;top:122.84px;font-size:12px;letter-spacing:-0.338px;color:#242424;">Clear</span>
<span class="t f" style="left:1345.00px;top:128.84px;font-size:12px;letter-spacing:0.107px;color:#242424;">Sort &amp;</span>
<span class="t f" style="left:1345.00px;top:144.84px;font-size:12px;letter-spacing:-0.112px;color:#242424;">Filter</span>
<span class="t f" style="left:1388.00px;top:128.84px;font-size:12px;letter-spacing:-0.115px;color:#242424;">Find &amp;</span>
<span class="t f" style="left:1385.00px;top:144.84px;font-size:12px;letter-spacing:-0.393px;color:#242424;">Select</span>
<span class="t f" style="left:1322.00px;top:166.19px;font-size:11px;letter-spacing:-0.377px;color:#616161;">Editing</span>
<span class="t f" style="left:1447.00px;top:128.84px;font-size:12px;letter-spacing:0.045px;color:#242424;">Add-ins</span>
<span class="t f" style="left:13.50px;top:192.85px;font-size:14px;letter-spacing:-1.203px;color:#242424;">H5</span>
<span class="t f" style="left:1500.50px;top:192.45px;font-size:14px;letter-spacing:-0.302px;color:#707070;">Find an add-in: Try &quot;GPT&quot;</span>
<span class="t f" style="left:1703.50px;top:628.00px;font-size:13px;letter-spacing:-0.183px;color:#242424;-webkit-text-stroke:0.45px #242424;">More Add-ins</span>
<span class="t f" style="left:67.70px;top:231.25px;font-size:12.7px;letter-spacing:0.131px;color:#616161;">A</span>
<span class="t f" style="left:155.40px;top:231.25px;font-size:12.7px;letter-spacing:-1.269px;color:#616161;">B</span>
<span class="t f" style="left:363.00px;top:231.25px;font-size:12.7px;letter-spacing:-1.172px;color:#616161;">C</span>
<span class="t f" style="left:591.50px;top:231.25px;font-size:12.7px;letter-spacing:-0.172px;color:#616161;">D</span>
<span class="t f" style="left:781.25px;top:231.25px;font-size:12.7px;letter-spacing:-1.969px;color:#616161;">E</span>
<span class="t f" style="left:919.35px;top:231.25px;font-size:12.7px;letter-spacing:-1.466px;color:#616161;">F</span>
<span class="t f" style="left:979.00px;top:231.25px;font-size:12.7px;letter-spacing:-0.875px;color:#616161;">G</span>
<span class="t f" style="left:1111.00px;top:231.25px;font-size:12.7px;letter-spacing:-1.531px;color:#616161;">I</span>
<span class="t f" style="left:1173.75px;top:231.25px;font-size:12.7px;letter-spacing:-1.844px;color:#616161;">J</span>
<span class="t f" style="left:1236.20px;top:231.25px;font-size:12.7px;letter-spacing:-0.869px;color:#616161;">K</span>
<span class="t f" style="left:1301.00px;top:231.25px;font-size:12.7px;letter-spacing:-1.062px;color:#616161;">L</span>
<span class="t f" style="left:1362.25px;top:231.25px;font-size:12.7px;letter-spacing:0.922px;color:#616161;">M</span>
<span class="t f" style="left:1427.30px;top:231.25px;font-size:12.7px;letter-spacing:0.228px;color:#616161;">N</span>
<span class="t f" style="left:1812.40px;top:231.25px;font-size:12.7px;letter-spacing:-0.566px;color:#616161;">T</span>
<span class="t f" style="left:1874.70px;top:231.25px;font-size:12.7px;letter-spacing:-0.572px;color:#616161;">U</span>
<span class="t f" style="left:1043.50px;top:231.25px;font-size:12.7px;letter-spacing:-0.172px;color:#0e703a;">H</span>
<span class="t f" style="left:30.90px;top:274.10px;font-size:12.7px;letter-spacing:-0.462px;color:#616161;">1</span>
<span class="t f" style="left:30.90px;top:333.60px;font-size:12.7px;letter-spacing:-0.462px;color:#616161;">2</span>
<span class="t f" style="left:30.90px;top:374.75px;font-size:12.7px;letter-spacing:-0.462px;color:#616161;">3</span>
<span class="t f" style="left:30.90px;top:397.00px;font-size:12.7px;letter-spacing:-0.462px;color:#616161;">4</span>
<span class="t f" style="left:30.90px;top:415.85px;font-size:12.7px;letter-spacing:-0.462px;color:#0e703a;">5</span>
<span class="t f" style="left:30.90px;top:444.85px;font-size:12.7px;letter-spacing:-0.462px;color:#616161;">6</span>
<span class="t f" style="left:30.90px;top:475.60px;font-size:12.7px;letter-spacing:-0.462px;color:#616161;">7</span>
<span class="t f" style="left:30.90px;top:500.85px;font-size:12.7px;letter-spacing:-0.462px;color:#616161;">8</span>
<span class="t f" style="left:30.90px;top:525.85px;font-size:12.7px;letter-spacing:-0.462px;color:#616161;">9</span>
<span class="t f" style="left:23.70px;top:550.85px;font-size:12.7px;letter-spacing:-0.163px;color:#616161;">10</span>
<span class="t f" style="left:23.70px;top:575.85px;font-size:12.7px;letter-spacing:0.314px;color:#616161;">11</span>
<span class="t f" style="left:23.70px;top:606.60px;font-size:12.7px;letter-spacing:-0.163px;color:#616161;">12</span>
<span class="t f" style="left:23.70px;top:643.35px;font-size:12.7px;letter-spacing:-0.163px;color:#616161;">13</span>
<span class="t f" style="left:23.70px;top:680.35px;font-size:12.7px;letter-spacing:-0.163px;color:#616161;">14</span>
<span class="t f" style="left:23.70px;top:717.35px;font-size:12.7px;letter-spacing:-0.163px;color:#616161;">15</span>
<span class="t f" style="left:23.70px;top:754.35px;font-size:12.7px;letter-spacing:-0.163px;color:#616161;">16</span>
<span class="t f" style="left:23.70px;top:791.35px;font-size:12.7px;letter-spacing:-0.163px;color:#616161;">17</span>
<span class="t f" style="left:23.70px;top:828.35px;font-size:12.7px;letter-spacing:-0.163px;color:#616161;">18</span>
<span class="t f" style="left:23.70px;top:865.35px;font-size:12.7px;letter-spacing:-0.163px;color:#616161;">19</span>
<span class="t fs" style="left:231.60px;top:327.56px;font-size:33px;letter-spacing:0.171px;color:#2f4d50;-webkit-text-stroke:0.35px #2f4d50;">Happiest Valley Farms</span>
<span class="t fs" style="left:230.40px;top:369.42px;font-size:20.4px;letter-spacing:0.134px;color:#2f4d50;-webkit-text-stroke:0.25px #2f4d50;">Happy plants means happy people</span>
<span class="t fs" style="left:692.80px;top:320.63px;font-size:60.5px;letter-spacing:0.368px;color:#2f4d50;-webkit-text-stroke:1px #2f4d50;">Invoice</span>
<span class="t f" style="left:195.10px;top:475.19px;font-size:15.6px;letter-spacing:-0.965px;color:#2f4d50;font-weight:700;">To:</span>
<span class="t f" style="left:229.60px;top:475.19px;font-size:15.6px;letter-spacing:0.004px;color:#2f464d;">Maria Sullivan</span>
<span class="t f" style="left:229.60px;top:498.19px;font-size:15.6px;letter-spacing:-0.209px;color:#2f464d;">The Palm Tree Nursery</span>
<span class="t f" style="left:229.60px;top:523.09px;font-size:15.6px;letter-spacing:0.101px;color:#2f464d;">987 6th Ave</span>
<span class="t f" style="left:229.60px;top:549.99px;font-size:15.6px;letter-spacing:-0.088px;color:#2f464d;">Santa Fe, NM 11121</span>
<span class="t f" style="left:229.60px;top:575.19px;font-size:15.6px;letter-spacing:0.073px;color:#2f464d;">201-555-0122</span>
<span class="t f" style="left:636.00px;top:475.19px;font-size:15.6px;letter-spacing:-0.420px;color:#2f4d50;font-weight:700;">Date:</span>
<span class="t f" style="left:687.20px;top:475.19px;font-size:15.6px;letter-spacing:-0.244px;color:#2f464d;">July 15, 2025</span>
<span class="t f" style="left:604.00px;top:498.19px;font-size:15.6px;letter-spacing:-0.304px;color:#2f4d50;font-weight:700;">Invoice #:</span>
<span class="t f" style="left:688.60px;top:498.19px;font-size:15.6px;letter-spacing:-0.677px;color:#2f464d;">100</span>
<span class="t f" style="left:578.80px;top:523.09px;font-size:15.6px;letter-spacing:-0.317px;color:#2f4d50;font-weight:700;">Customer ID:</span>
<span class="t f" style="left:687.20px;top:523.09px;font-size:15.6px;letter-spacing:-0.134px;color:#2f464d;">AAA</span>
<span class="t f" style="left:112.10px;top:642.99px;font-size:15.6px;letter-spacing:-0.586px;color:#ffffff;font-weight:700;">Salesperson</span>
<span class="t f" style="left:229.10px;top:642.99px;font-size:15.6px;letter-spacing:-0.911px;color:#ffffff;font-weight:700;">Job</span>
<span class="t f" style="left:536.20px;top:642.99px;font-size:15.6px;letter-spacing:-0.422px;color:#ffffff;font-weight:700;">Payment Terms</span>
<span class="t f" style="left:796.80px;top:642.99px;font-size:15.6px;letter-spacing:-0.049px;color:#ffffff;font-weight:700;">Due Date</span>
<span class="t f" style="left:112.10px;top:679.19px;font-size:15.6px;letter-spacing:-0.318px;color:#2f464d;">Sonu Jain</span>
<span class="t f" style="left:229.10px;top:679.19px;font-size:15.6px;letter-spacing:-0.703px;color:#2f464d;">Sales</span>
<span class="t f" style="left:541.90px;top:679.19px;font-size:15.6px;letter-spacing:0.202px;color:#2f464d;">Due upon receipt</span>
<span class="t f" style="left:854.10px;top:679.19px;font-size:15.6px;letter-spacing:-1.129px;color:#2f464d;">TBD</span>
<span class="t f" style="left:112.10px;top:753.69px;font-size:15.6px;letter-spacing:-0.133px;color:#ffffff;font-weight:700;">Qty</span>
<span class="t f" style="left:229.10px;top:753.69px;font-size:15.6px;letter-spacing:-0.262px;color:#ffffff;font-weight:700;">Description</span>
<span class="t f" style="left:575.90px;top:753.69px;font-size:15.6px;letter-spacing:-0.300px;color:#ffffff;font-weight:700;">Unit Price</span>
<span class="t f" style="left:795.30px;top:753.69px;font-size:15.6px;letter-spacing:-0.378px;color:#ffffff;font-weight:700;">Line Total</span>
<span class="t f" style="left:112.10px;top:789.89px;font-size:15.6px;letter-spacing:-0.306px;color:#2f464d;">20.00</span>
<span class="t f" style="left:229.10px;top:789.89px;font-size:15.6px;letter-spacing:-0.028px;color:#2f464d;">Areca palm</span>
<span class="t f" style="left:626.40px;top:789.89px;font-size:15.6px;letter-spacing:-0.306px;color:#2f464d;">$2.50</span>
<span class="t f" style="left:835.90px;top:789.89px;font-size:15.6px;letter-spacing:-0.284px;color:#2f464d;">$50.00</span>
<span class="t f" style="left:112.10px;top:826.79px;font-size:15.6px;letter-spacing:-0.306px;color:#2f464d;">35.00</span>
<span class="t f" style="left:229.10px;top:826.79px;font-size:15.6px;letter-spacing:0.153px;color:#2f464d;">Majesty palm</span>
<span class="t f" style="left:626.40px;top:826.79px;font-size:15.6px;letter-spacing:-0.306px;color:#2f464d;">$3.00</span>
<span class="t f" style="left:827.40px;top:826.79px;font-size:15.6px;letter-spacing:-0.268px;color:#2f464d;">$105.00</span>
<span class="t f" style="left:112.10px;top:863.69px;font-size:15.6px;letter-spacing:-0.306px;color:#2f464d;">15.00</span>
<span class="t f" style="left:229.10px;top:863.69px;font-size:15.6px;letter-spacing:-0.050px;color:#2f464d;">Bismarck palm</span>
<span class="t f" style="left:626.40px;top:863.69px;font-size:15.6px;letter-spacing:-0.306px;color:#2f464d;">$2.50</span>
<span class="t f" style="left:835.90px;top:863.69px;font-size:15.6px;letter-spacing:-0.284px;color:#2f464d;">$37.50</span>
<span class="t f" style="left:105.00px;top:903.65px;font-size:14px;letter-spacing:-0.010px;color:#333333;-webkit-text-stroke:0.5px #333;">Service invoice</span>
<span class="t f" style="left:32.00px;top:936.04px;font-size:12px;letter-spacing:-0.061px;color:#333333;">Workbook Statistics</span>
<span class="t f" style="left:1482.80px;top:936.04px;font-size:12px;letter-spacing:0.035px;color:#333333;">Loading Add-ins</span>
<span class="t f" style="left:1632.90px;top:936.04px;font-size:12px;letter-spacing:-0.068px;color:#333333;">Give Feedback to Microsoft</span>
<span class="t f" style="left:1840.20px;top:936.04px;font-size:12px;letter-spacing:-0.476px;color:#333333;">100%</span>
<span class="t f" style="left:240.90px;top:131.93px;font-size:14.5px;letter-spacing:-2.384px;color:#242424;font-weight:700;">B</span>
<span class="t f" style="left:296.60px;top:132.02px;font-size:12.5px;letter-spacing:-0.331px;color:#3b3b3b;">U</span>
<span class="t f" style="left:324.30px;top:131.82px;font-size:12.5px;letter-spacing:0.469px;color:#3b3b3b;">D</span>
<span class="t f" style="left:350.50px;top:133.02px;font-size:12.5px;letter-spacing:-0.453px;color:#3b3b3b;">ab</span>
<span class="t f" style="left:418.80px;top:103.70px;font-size:15px;letter-spacing:-0.816px;color:#3b3b3b;">A</span>
<span class="t f" style="left:446.80px;top:106.24px;font-size:12px;letter-spacing:-0.916px;color:#3b3b3b;">A</span>
<span class="t f" style="left:1352.10px;top:97.02px;font-size:11.2px;letter-spacing:-0.669px;color:#2b88d8;">A</span>
<span class="t f" style="left:1352.30px;top:107.71px;font-size:11.8px;letter-spacing:-0.619px;color:#3b3b3b;">Z</span>
<span class="t fs" style="left:201.20px;top:191.80px;font-size:16px;letter-spacing:1.147px;color:#444;font-style:italic;">f</span>
<span class="t f" style="left:206.40px;top:196.71px;font-size:10.5px;letter-spacing:-0.350px;color:#444;">x</span>
</body></html>
